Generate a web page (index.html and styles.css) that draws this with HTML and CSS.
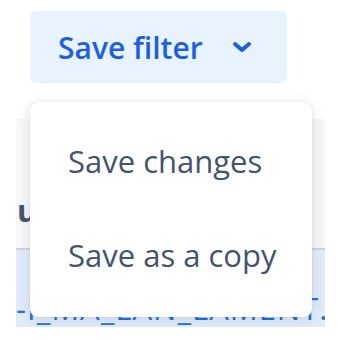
FILE: index.html
```html
<!DOCTYPE html>
<html lang="en">
<head>
    <meta charset="UTF-8">
    <meta name="viewport" content="width=device-width, initial-scale=1.0">
    <title>Save filter</title>
    <link rel="stylesheet" href="styles.css">
</head>
<body>
    <div class="page">
        <button class="save-btn">
            <span>Save filter</span>
            <svg class="chevron" width="20" height="12" viewBox="0 0 20 12">
                <path d="M3 3 L10 9 L17 3" fill="none" stroke="currentColor" stroke-width="4" stroke-linecap="round" stroke-linejoin="round"/>
            </svg>
        </button>

        <div class="table">
            <div class="head-row">
                <span class="head-cell">u</span>
            </div>
            <div class="row selected">
                <span class="key">-I_MA_LAN_LAMENT.COM</span>
            </div>
        </div>

        <!-- dropdown menu over the table -->
        <div class="menu">
            <div class="menu-item">Save changes</div>
            <div class="menu-item">Save as a copy</div>
        </div>
    </div>
</body>
</html>
```

FILE: styles.css
```css
body {
    margin: 0;
    background-color: #fff;
    font-family: "Open Sans", "Noto Sans", sans-serif;
}
.page {
    position: relative;
    width: 338px;
    height: 340px;
    overflow: hidden;
}
.save-btn {
    display: flex;
    align-items: center;
    gap: 29px;
    margin: 11px 0 0 30px;
    width: 257px;
    height: 72px;
    padding: 0 0 0 28px;
    border: none;
    border-radius: 6px;
    background-color: #e9f2ff;
    color: #1d5fe0;
    font-family: inherit;
    font-size: 30px;
    font-weight: 600;
}
.chevron {
    display: block;
}
.table {
    margin: 36px 0 0 16px;
    width: 309px;
    overflow: hidden;
}
.head-row {
    height: 129px;
    background-color: #f6f7f9;
    border-bottom: 2px solid #cfd3d9;
    display: flex;
    align-items: flex-end;
}
.head-cell {
    padding: 0 0 22px 1px;
    font-size: 31px;
    font-weight: 700;
    line-height: 1;
    color: #44546f;
}
.row {
    height: 77px;
    display: flex;
    align-items: flex-end;
    white-space: nowrap;
}
.selected {
    background-color: #e1ebfa;
}
.key {
    padding-bottom: 3px;
    font-size: 31px;
    letter-spacing: 1px;
    line-height: 1;
    color: #1f6fe5;
}
.menu {
    position: absolute;
    left: 30px;
    top: 102px;
    width: 282px;
    padding: 12px 0 15px;
    background-color: #fff;
    border-radius: 8px;
    box-shadow: 0 2px 14px rgba(9, 30, 66, 0.12), 0 0 1px rgba(9, 30, 66, 0.2);
}
.menu-item {
    height: 94px;
    display: flex;
    align-items: center;
    padding-left: 38px;
    font-size: 31px;
    color: #44546f;
}
```
